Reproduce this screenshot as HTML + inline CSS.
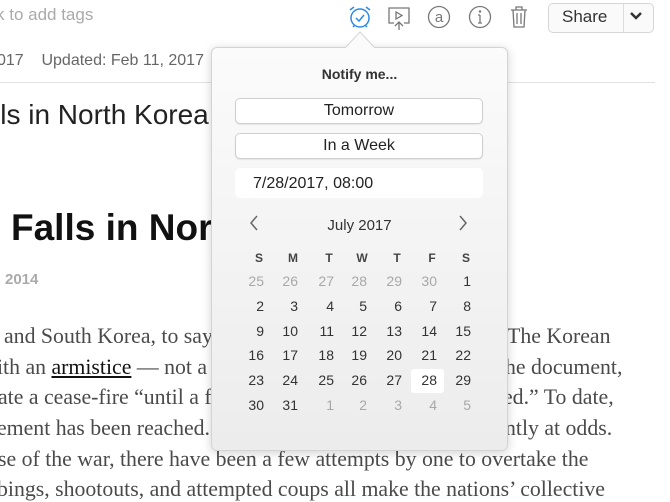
<!DOCTYPE html>
<html><head><style>
body{margin:0;width:670px;height:491px;overflow:hidden;background:#fff;position:relative;font-family:"Liberation Sans",sans-serif}
.a{position:absolute;white-space:nowrap}
.ser{font-family:"Liberation Serif",serif;font-size:21.8px;color:#4a4a4a}
.pop{position:absolute;left:211px;top:47px;width:295px;height:402px;border-radius:6px;background:linear-gradient(#fbfbfb,#ececec);border:1px solid #d4d4d4;box-shadow:0 2px 10px rgba(0,0,0,.18)}
.btn{position:absolute;left:23px;width:246px;height:24px;border:1px solid #cfcfcf;border-radius:5px;background:#fff;text-align:center;font-size:16px;line-height:24px;color:#222;box-shadow:0 1px 1px rgba(0,0,0,.08)}
.c{position:absolute;width:30px;text-align:right}
.h{font-weight:bold;font-size:12px;text-align:center;width:20px}
</style></head><body>
<div class="a" style="left:-4px;top:5px;font-size:17px;color:#aaa">k to add tags</div>
<svg class="a" style="left:346px;top:4px" width="28" height="26" viewBox="0 0 28 26" fill="none" stroke="#2d8ae6" stroke-width="1.5"><circle cx="14" cy="14" r="9"/><path d="M10 14l3 3 5-6"/><path d="M4 6l4-3M24 6l-4-3M7 23l2-2M21 23l-2-2"/></svg>
<svg class="a" style="left:386px;top:5px" width="26" height="26" viewBox="0 0 26 26" fill="none" stroke="#777" stroke-width="1.3"><path d="M8 18H3V3h20v15h-5"/><path d="M10 7v7l6-3.5z"/><path d="M13 25v-8M9 21l4-4 4 4"/></svg>
<svg class="a" style="left:427px;top:5px" width="24" height="24" viewBox="0 0 24 24" fill="none" stroke="#777" stroke-width="1.3"><circle cx="12" cy="12" r="10.5"/><text x="12" y="17" font-size="15" text-anchor="middle" fill="#777" stroke="none" font-family="Liberation Sans">a</text></svg>
<svg class="a" style="left:468px;top:5px" width="24" height="24" viewBox="0 0 24 24" fill="none" stroke="#777" stroke-width="1.3"><circle cx="12" cy="12" r="10.5"/><path d="M12 10v8M10 18h4M10 10h2"/><circle cx="12" cy="6.5" r=".6" fill="#777"/></svg>
<svg class="a" style="left:508px;top:5px" width="22" height="24" viewBox="0 0 22 24" fill="none" stroke="#777" stroke-width="1.3"><path d="M3 5h16M8 5V2h6v3M5 5l1 17h10l1-17M9 8v11M13 8v11"/></svg>
<div class="a" style="left:548px;top:3px;width:104px;height:28px;border:1px solid #d6d6d6;border-radius:5px;background:#fafafa"></div>
<div class="a" style="left:562px;top:7px;font-size:17px;color:#333">Share</div>
<div class="a" style="left:623px;top:4px;width:1px;height:28px;background:#ddd"></div>
<svg class="a" style="left:629px;top:11px" width="14" height="10" viewBox="0 0 14 10"><path d="M2 2l5 5 5-5" stroke="#333" stroke-width="2.5" fill="none"/></svg>
<div class="a" style="left:-3px;top:52px;font-size:16px;color:#666">017&nbsp;&nbsp;&nbsp;&nbsp;Updated: Feb 11, 2017</div>
<div class="a" style="left:0;top:82px;width:655px;height:1px;background:#e2e2e2"></div>
<div class="a" style="left:-6px;top:99px;font-size:28px;color:#222">lls in North Korea</div>
<div class="a" style="left:11px;top:207px;font-size:37px;font-weight:bold;color:#111">Falls in North Korea</div>
<div class="a" style="left:5px;top:271px;font-size:15px;font-weight:bold;color:#aaa">2014</div>
<div class="a ser" style="left:4px;top:324px">and South Korea, to say</div>
<div class="a ser" style="left:-3px;top:355px">ith an <u style="color:#111">armistice</u> — not a</div>
<div class="a ser" style="left:-2px;top:385px">ate a cease-fire “until a fi</div>
<div class="a ser" style="left:-3px;top:416px">ement has been reached.</div>
<div class="a ser" style="left:-2px;top:447px">se of the war, there have been a few attempts by one to overtake the</div>
<div class="a ser" style="left:-3px;top:477px">bings, shootouts, and attempted coups all make the nations’ collective</div>
<div class="a ser" style="left:507px;top:324px">The Korean</div>
<div class="a ser" style="left:505px;top:355px">he document,</div>
<div class="a ser" style="left:503px;top:385px">ed.” To date,</div>
<div class="a ser" style="left:505px;top:416px">ntly at odds.</div>
<div class="pop">
<div class="a" style="left:0;width:295px;top:18px;text-align:center;font-weight:bold;font-size:14px;color:#333">Notify me...</div>
<div class="btn" style="top:50px">Tomorrow</div>
<div class="btn" style="top:85px">In a Week</div>
<div class="a" style="left:23px;top:120px;width:248px;height:30px;border-radius:5px;background:#fff"></div>
<div class="a" style="left:41px;top:127px;font-size:16px;color:#222">7/28/2017, 08:00</div>
<svg class="a" style="left:36px;top:166px" width="12" height="18"><path d="M9 2L3 9l6 7" stroke="#666" stroke-width="1.5" fill="none"/></svg>
<svg class="a" style="left:245px;top:166px" width="12" height="18"><path d="M3 2l6 7-6 7" stroke="#666" stroke-width="1.5" fill="none"/></svg>
<div class="a" style="left:0;width:295px;top:169px;text-align:center;font-size:15px;color:#333">July 2017</div>
<div class="a" style="left:199px;top:321px;width:33px;height:24px;background:#fff;border-radius:3px"></div>
<div id="cal"></div>
</div>
<script>
var xs=[52,86,122,155,190,225,259],H="SMTWTFS",o="";
for(var i=0;i<7;i++)o+='<div class="a h" style="left:'+(xs[i]-15)+'px;top:203px;color:#444">'+H[i]+'</div>';
var rows=[[25,26,27,28,29,30,1],[2,3,4,5,6,7,8],[9,10,11,12,13,14,15],[16,17,18,19,20,21,22],[23,24,25,26,27,28,29],[30,31,1,2,3,4,5]];
for(var r=0;r<6;r++)for(var i=0;i<7;i++){var v=rows[r][i],g=(r==0&&i<6)||(r==5&&i>1);
o+='<div class="a c" style="left:'+(xs[i]-30)+'px;top:'+(225+r*24.8)+'px;font-size:14px;color:'+(g?'#a8a8a8':'#333')+'">'+v+'</div>';}
document.getElementById('cal').innerHTML=o;
</script>
<svg class="a" style="left:345px;top:31px" width="30" height="18"><path d="M0 17L15 1l15 16" fill="#fbfbfb" stroke="#d4d4d4"/><rect x="0" y="17" width="30" height="2" fill="#fbfbfb"/></svg>
</body></html>
